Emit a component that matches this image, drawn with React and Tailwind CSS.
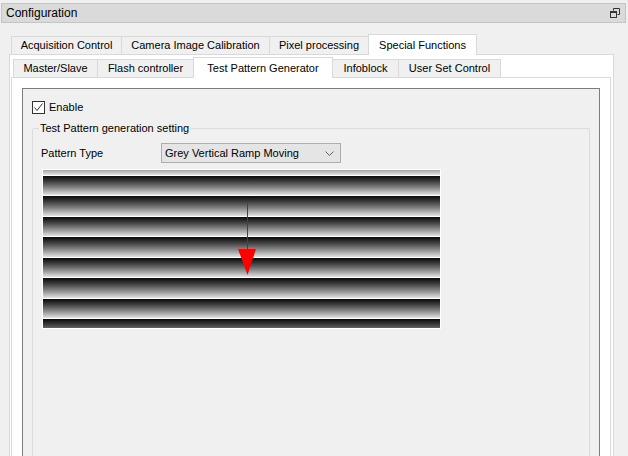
import React from "react";

const topTabs = [
  { label: "Acquisition Control", cls: "w-[111px]" },
  { label: "Camera Image Calibration", cls: "w-[149px] -ml-px" },
  { label: "Pixel processing", cls: "w-[100px] -ml-px" },
  { label: "Special Functions", cls: "w-[109px] -ml-px", active: true },
];

const subTabs = [
  { label: "Master/Slave", cls: "w-[85px]" },
  { label: "Flash controller", cls: "w-[97px] -ml-px" },
  { label: "Test Pattern Generator", cls: "w-[140px] -ml-px", active: true },
  { label: "Infoblock", cls: "w-[67px] -ml-px" },
  { label: "User Set Control", cls: "w-[103px] -ml-px" },
];

const Tab = ({ label, cls, active }) => (
  <div
    className={
      active
        ? `${cls} relative z-10 h-[21px] -mb-px bg-white border-t border-x border-[#d9d9d9] flex items-center justify-center`
        : `${cls} h-[18px] bg-[#f0f0f0] border-t border-x border-[#d9d9d9] flex items-center justify-center`
    }
  >
    <span className="whitespace-nowrap leading-none">{label}</span>
  </div>
);

const App = () => {
  return (
    <div className="w-[628px] h-[456px] overflow-hidden bg-[#f0f0f0] text-black text-[11px] font-['Liberation_Sans',Arial,sans-serif]">
      {/* title bar */}
      <div className="mt-[3px] ml-[1px] w-[625px] h-[20px] border border-[#c4c4c4] bg-[#dadada] flex items-center justify-between pl-[4px] pr-[5px]">
        <span className="text-[12px] leading-none">Configuration</span>
        <svg width="10" height="10" viewBox="0 0 10 10" className="text-[#333]">
          <path d="M3.5 0.5h6v6h-2" fill="none" stroke="currentColor" />
          <path d="M3.5 0.5v2" fill="none" stroke="currentColor" />
          <rect x="0.5" y="3.5" width="6" height="6" fill="none" stroke="currentColor" />
          <path d="M0.5 4.5h6" stroke="currentColor" />
        </svg>
      </div>

      {/* outer tab widget */}
      <div className="ml-[9px] mt-[11px] w-[605px]">
        <div className="flex items-end h-[20px] pl-[2px]">
          {topTabs.map((t) => (
            <Tab key={t.label} {...t} />
          ))}
        </div>
        <div className="h-[440px] bg-white border border-[#d9d9d9] pt-[1px] pl-[1px]">
          <div className="flex items-end h-[20px] mt-[1px] pl-[2px]">
            {subTabs.map((t) => (
              <Tab key={t.label} {...t} />
            ))}
          </div>
          <div className="w-[600px] h-[420px] bg-white border border-[#d9d9d9] px-[10px] pt-[10px]">
            <div className="h-[400px] bg-[#f0f0f0] border border-[#7c7c84] pt-[12px] pl-[9px] pr-[9px]">
              {/* enable */}
              <div className="flex items-center h-[13px] gap-[4px]">
                <div className="w-[13px] h-[13px] border border-[#333] bg-white flex items-center justify-center">
                  <svg width="11" height="11" viewBox="0 0 11 11">
                    <path d="M1.5 5.5l2.5 3l5.5-7" fill="none" stroke="#333" strokeWidth="1" />
                  </svg>
                </div>
                <span className="leading-none">Enable</span>
              </div>

              {/* group box */}
              <fieldset className="mt-[7px] h-[360px] border border-[#dcdcdc] rounded-[2px]">
                <legend className="ml-[6px] px-[1px] leading-[14px]">Test Pattern generation setting</legend>
                <div className="pl-[8px]">
                  <div className="flex items-center mt-[8px]">
                    <span className="w-[120px] leading-none">Pattern Type</span>
                    <div className="w-[180px] h-[20px] border border-[#adadad] bg-[#e5e5e5] flex items-center justify-between pl-[3px] pr-[6px]">
                      <span className="leading-none">Grey Vertical Ramp Moving</span>
                      <svg width="9" height="5" viewBox="0 0 9 5">
                        <path d="M0.5 0.5l4 4l4-4" fill="none" stroke="#606060" />
                      </svg>
                    </div>
                  </div>

                  {/* pattern preview */}
                  <div className="relative mt-[6px] ml-[1px] w-[399px] h-[160px] border border-white overflow-hidden">
                    <div className="-mt-[15px] flex flex-col">
                      {Array.from({ length: 9 }).map((_, i) => (
                        <div
                          key={i}
                          className="h-[20.5px] shrink-0 bg-linear-to-b from-[#0a0a0a] to-[#e4e4e4] border-b border-white"
                        />
                      ))}
                    </div>
                    <svg
                      width="19"
                      height="73"
                      viewBox="0 0 19 73"
                      className="absolute left-[195px] top-[33px]"
                    >
                      <line x1="9.5" y1="0" x2="9.5" y2="46" stroke="#e00000" strokeWidth="1" />
                      <polygon points="0,46 18,46 9.5,72" fill="#ff0000" />
                    </svg>
                  </div>
                </div>
              </fieldset>
            </div>
          </div>
        </div>
      </div>
    </div>
  );
};

export default App;
